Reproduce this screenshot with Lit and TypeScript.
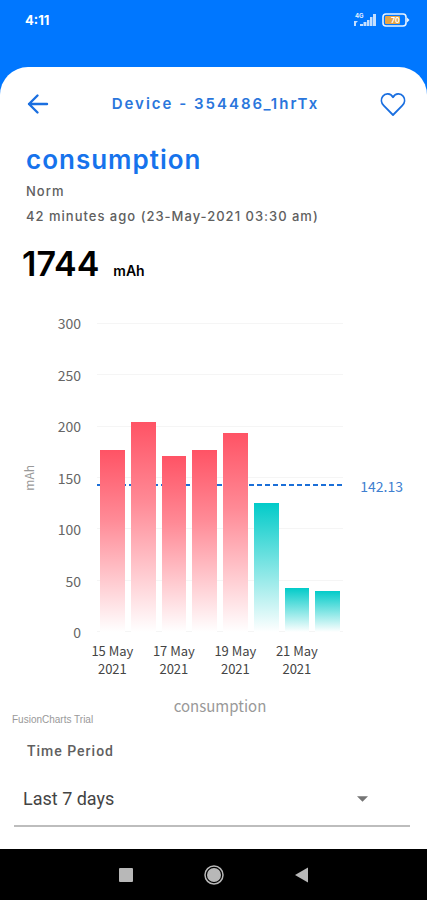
import { LitElement, html, css, svg } from "lit";
import { customElement, property } from "lit/decorators.js";

interface Reading {
  day: string;
  value: number;
}

const READINGS: Reading[] = [
  { day: "15 May", value: 177 },
  { day: "16 May", value: 204 },
  { day: "17 May", value: 171 },
  { day: "18 May", value: 177 },
  { day: "19 May", value: 193 },
  { day: "20 May", value: 125 },
  { day: "21 May", value: 43 },
  { day: "22 May", value: 40 },
];

@customElement("status-bar")
export class StatusBar extends LitElement {
  static styles = css`
    :host {
      display: flex;
      justify-content: space-between;
      align-items: center;
      height: 39px;
      padding: 0 17px 0 25px;
      color: #fff;
      font: 700 13px/16px Inter, sans-serif;
    }
    .icons {
      display: flex;
      align-items: center;
      gap: 5px;
    }
    .network {
      fill: #e4f1ff;
      font: 700 6px Inter, sans-serif;
    }
    .charge {
      fill: #fff;
      font: 700 7px Inter, sans-serif;
    }
    svg {
      display: block;
    }
  `;
  render() {
    return html`
      <span>4:11</span>
      <span class="icons">
        <svg width="24" height="14" viewBox="0 0 24 14">
          <text class="network" x="2" y="5">4G</text>
          <g fill="#c4dfff">
            <path d="M1 8h4l-2 2v3H1z" />
            <path d="M7 11h3v2H7zM10.500 9h3v4h-3zM14 7h2.500v6H14zM17 4h2.500v9H17zM20 1h3v12h-3z" />
          </g>
        </svg>
        <svg width="28" height="14" viewBox="0 0 28 14">
          <rect x="1" y="1" width="23" height="12" rx="3" fill="none" stroke="#e8f3ff" stroke-width="1.6" />
          <path d="M25 4.500l2.500 2.500-2.500 2.500z" fill="#e8f3ff" />
          <rect x="3" y="3" width="15" height="8" rx="1" fill="#e8a544" />
          <text class="charge" x="9" y="10">70</text>
        </svg>
      </span>
    `;
  }
}

@customElement("usage-chart")
export class UsageChart extends LitElement {
  @property({ attribute: false }) readings: Reading[] = [];
  @property({ type: Number }) norm = 0;
  @property({ type: Number }) max = 300;
  @property({ type: Number }) step = 50;

  static styles = css`
    :host {
      display: block;
      font: 400 14px/18px "Noto Sans CJK SC", "Noto Sans", sans-serif;
      color: #666;
    }
    .chart {
      display: grid;
      grid-template-columns: 16px 44px minmax(0, 1fr) 68px;
      padding: 0 16px 0 21px;
    }
    .unit {
      align-self: center;
      justify-self: center;
      writing-mode: vertical-rl;
      transform: rotate(180deg);
      font-size: 12px;
      color: #999;
    }
    .scale {
      display: flex;
      flex-direction: column;
      justify-content: space-between;
      text-align: right;
      height: 327px;
    }
    .plot,
    .side {
      position: relative;
      height: 309px;
      margin: 9px 0;
    }
    .plot {
      margin-left: 16px;
    }
    .lines {
      position: absolute;
      inset: 0;
      display: flex;
      flex-direction: column;
      justify-content: space-between;
    }
    .line {
      height: 1px;
      background: #f5f5f5;
    }
    .norm {
      position: absolute;
      left: 0;
      right: 0;
      height: 2px;
      background: repeating-linear-gradient(90deg, #1b6fd8 0 5px, transparent 5px 8px);
    }
    .norm-label {
      position: absolute;
      right: 8px;
      transform: translateY(50%);
      color: #3f7fd0;
    }
    .bars {
      position: relative;
      display: grid;
      grid-template-columns: repeat(8, minmax(0, 1fr));
      align-items: end;
      height: 100%;
    }
    .bar {
      margin: 0 3px;
    }
    .over {
      background: linear-gradient(#ff5365, #ff8a96 38%, #fff);
    }
    .under {
      background: linear-gradient(#02cbc9, #fff);
    }
    .days {
      grid-column: 3;
      display: grid;
      grid-template-columns: repeat(8, minmax(0, 1fr));
      margin: 1px 0 0 16px;
      font-size: 13px;
      color: #444;
      text-align: center;
      white-space: nowrap;
    }
    .day {
      justify-self: center;
    }
    .caption {
      grid-column: 3;
      margin: 19px 0 0 16px;
      text-align: center;
      font-size: 15px;
      color: #999;
    }
    .credit {
      padding-left: 12px;
      font: 400 10px/10px "Liberation Sans", sans-serif;
      color: #999;
    }
  `;

  render() {
    const ticks: number[] = [];
    for (let t = this.max; t >= 0; t -= this.step) ticks.push(t);
    const pct = (v: number) => `${(v / this.max) * 100}%`;
    return html`
      <div class="chart">
        <div class="unit">mAh</div>
        <div class="scale">${ticks.map((t) => html`<span>${t}</span>`)}</div>
        <div class="plot">
          <div class="lines">${ticks.map(() => html`<div class="line"></div>`)}</div>
          <div class="norm" style="bottom:${pct(this.norm)}"></div>
          <div class="bars">
            ${this.readings.map(
              (r) => html`<div
                class="bar ${r.value > this.norm ? "over" : "under"}"
                style="height:${pct(r.value)}"
              ></div>`
            )}
          </div>
        </div>
        <div class="side">
          <span class="norm-label" style="bottom:${pct(this.norm)}">${this.norm}</span>
        </div>
        <div class="days">
          ${this.readings.map((r, i) =>
            i % 2 ? html`<span></span>` : html`<span class="day">${r.day}<br />2021</span>`
          )}
        </div>
        <div class="caption">consumption</div>
      </div>
      <div class="credit">FusionCharts Trial</div>
    `;
  }
}

@customElement("system-nav")
export class SystemNav extends LitElement {
  static styles = css`
    :host {
      display: flex;
      justify-content: center;
      align-items: center;
      gap: 64px;
      height: 51px;
      background: #000;
    }
    button {
      display: grid;
      place-items: center;
      width: 24px;
      height: 24px;
      padding: 0;
      border: 0;
      background: none;
    }
    svg {
      display: block;
    }
  `;
  private key(label: string, shape: unknown) {
    return html`<button aria-label=${label}>
      <svg width="24" height="24" viewBox="0 0 24 24" fill="#b8b8b8">${shape}</svg>
    </button>`;
  }
  render() {
    return html`
      ${this.key("Recent apps", svg`<rect x="5" y="5" width="14" height="14" rx="1" />`)}
      ${this.key(
        "Home",
        svg`<circle cx="12" cy="12" r="9" fill="none" stroke="#b8b8b8" stroke-width="1.500" /><circle cx="12" cy="12" r="7" />`
      )}
      ${this.key("Back", svg`<path d="M5 12L18 4.500v15z" />`)}
    `;
  }
}

@customElement("app-root")
export class AppRoot extends LitElement {
  static styles = css`
    :host {
      display: flex;
      flex-direction: column;
      min-height: 100vh;
      background: #0077ff;
      font-family: Inter, sans-serif;
    }
    .card {
      flex: 1;
      margin-top: 28px;
      border-radius: 28px 28px 0 0;
      background: #fff;
    }
    header {
      display: flex;
      justify-content: space-between;
      align-items: center;
      padding: 22px 19px 0 23px;
    }
    .icon {
      padding: 0;
      border: 0;
      background: none;
      color: #1a6fe0;
    }
    .icon svg {
      display: block;
    }
    h1 {
      margin: 0;
      font-size: 15px;
      line-height: 20px;
      font-weight: 600;
      letter-spacing: 2px;
      color: #2a76dc;
    }
    .summary {
      padding: 25px 26px 0;
    }
    h2 {
      margin: 0 0 3px;
      font-size: 26px;
      line-height: 32px;
      font-weight: 600;
      letter-spacing: 1px;
      color: #1673ec;
    }
    p {
      margin: 0;
      font-size: 13px;
      line-height: 25px;
      font-weight: 500;
      letter-spacing: 1px;
      color: #606060;
    }
    .reading {
      display: flex;
      align-items: baseline;
      gap: 14px;
      padding: 14px 22px 0;
      font-size: 34px;
      line-height: 42px;
      font-weight: 600;
      color: #000;
    }
    .reading span {
      font-size: 14px;
    }
    usage-chart {
      margin-top: 22px;
    }
    .field {
      margin: 16px 17px 0 14px;
      font-family: Roboto, sans-serif;
    }
    label {
      display: block;
      padding-left: 13px;
      font-size: 14px;
      line-height: 20px;
      font-weight: 500;
      letter-spacing: 1px;
      color: #606060;
    }
    .picker {
      display: grid;
      align-items: center;
      margin-top: 12px;
      border-bottom: 2px solid #bdbdbd;
    }
    .picker > * {
      grid-area: 1 / 1;
    }
    select {
      width: 100%;
      height: 52px;
      padding: 0 9px;
      border: 0;
      appearance: none;
      background: none;
      font: 400 18px/24px Roboto, sans-serif;
      color: #444;
    }
    .arrow {
      justify-self: end;
      margin-right: 42px;
      pointer-events: none;
    }
  `;

  render() {
    return html`
      <status-bar></status-bar>
      <main class="card">
        <header>
          <button class="icon" aria-label="Back">
            <svg width="30" height="30" viewBox="0 0 30 30" fill="none" stroke="currentColor" stroke-width="2.400" stroke-linecap="round" stroke-linejoin="round">
              <path d="M24 15H6M14.500 6.500L6 15l8.500 8.500" />
            </svg>
          </button>
          <h1>Device - 354486_1hrTx</h1>
          <button class="icon" aria-label="Favourite">
            <svg width="30" height="30" viewBox="0 0 30 30" fill="none" stroke="currentColor" stroke-width="1.800" stroke-linejoin="round">
              <path d="M15 26L5.800 16.700C3 13.800 2.800 9.800 4.800 7.200C7.300 4 12.500 3.900 15 8.200C17.500 3.900 22.700 4 25.200 7.200C27.200 9.800 27 13.800 24.200 16.700Z" />
            </svg>
          </button>
        </header>
        <section class="summary">
          <h2>consumption</h2>
          <p>Norm</p>
          <p>42 minutes ago (23-May-2021 03:30 am)</p>
        </section>
        <div class="reading">1744 <span>mAh</span></div>
        <usage-chart .readings=${READINGS} .norm=${142.13}></usage-chart>
        <div class="field">
          <label for="period">Time Period</label>
          <div class="picker">
            <select id="period">
              <option>Last 7 days</option>
            </select>
            <svg class="arrow" width="11" height="6" viewBox="0 0 12 6"><path d="M0 0h12L6 6z" fill="#757575" /></svg>
          </div>
        </div>
      </main>
      <system-nav></system-nav>
    `;
  }
}
